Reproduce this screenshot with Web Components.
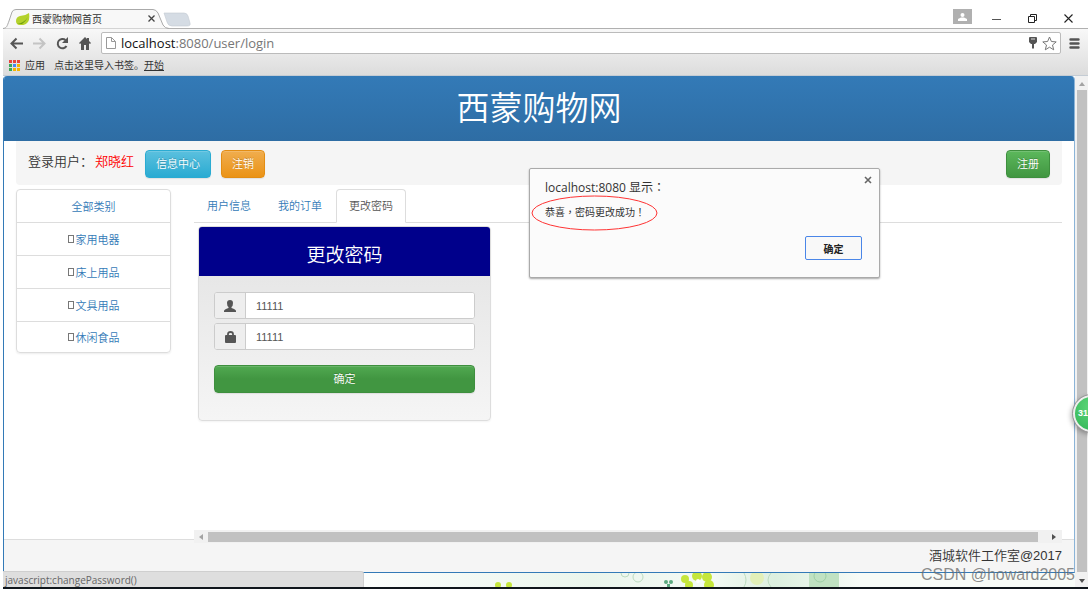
<!DOCTYPE html>
<html lang="zh-CN">
<head>
<meta charset="utf-8">
<title>西蒙购物网首页</title>
<style>
html,body{margin:0;height:100%;background:#fff}
body{font-family:"Liberation Sans","Noto Sans CJK SC",sans-serif;font-size:11px;color:#333}
</style>
</head>
<body>
<browser-window>
  <tab-strip slot="tabs">西蒙购物网首页</tab-strip>
  <address-bar slot="address"></address-bar>
  <bookmark-bar slot="bookmarks"></bookmark-bar>
  <shop-page>
    <shop-header slot="header">西蒙购物网</shop-header>
    <user-bar slot="user">郑晓红</user-bar>
    <category-list slot="side"></category-list>
    <shop-tabs></shop-tabs>
    <password-panel></password-panel>
  </shop-page>
  <alert-dialog slot="overlay" lang="zh-Hant">恭喜，密码更改成功！</alert-dialog>
</browser-window>
<script>
const define = (name, html, setup) => customElements.define(name, class extends HTMLElement {
  constructor() {
    super();
    const t = document.createElement('template');
    t.innerHTML = '<style>*{box-sizing:border-box}button,input{font:inherit}a{text-decoration:none}</style>' + html;
    this.attachShadow({mode: 'open'}).append(t.content.cloneNode(true));
    if (setup) setup.call(this, this.shadowRoot);
  }
});

define('browser-window', `
<style>
:host{display:flex;flex-direction:column;box-sizing:border-box;min-height:100vh;padding:9px 2px 1px 3px;position:relative;overflow:hidden}
.tools{background:linear-gradient(#f8f8f8,#dcdcdc);border-top:1px solid #b0b0b0;border-bottom:1px solid #c4ccd4}
.view{flex:1;display:flex;background:#fff;border-bottom:2px solid #10161c;min-height:0;position:relative;overflow:hidden}
.page{flex:1;display:flex;min-width:0}
.status{position:absolute;left:0;bottom:0;width:361px;height:16px;background:#dedede;border-top:1px solid #cfcfcf;border-right:1px solid #cfcfcf;border-radius:0 3px 0 0;font:10px/16px "Open Sans",sans-serif;color:#666;padding-left:2px}
.mark{position:absolute;right:13px;bottom:2px;font-size:16px;line-height:20px;color:rgba(110,110,110,.8)}
.ball{position:absolute;right:-22px;top:319px;width:37px;height:37px;border-radius:50%;background:radial-gradient(circle at 50% 30%,#5fd77a,#2fb355);border:2px solid #eee;outline:1px solid #999;box-shadow:-2px 2px 5px rgba(0,0,0,.3);color:#fff;font-weight:bold;font-size:9px;line-height:33px;padding-left:3px}
</style>
<slot name="tabs"></slot>
<div class="tools"><slot name="address"></slot><slot name="bookmarks"></slot></div>
<div class="view"><div class="page"><slot></slot></div><scroll-track></scroll-track>
<div class="status">javascript:changePassword()</div><div class="mark">CSDN @howard2005</div><div class="ball">31</div></div>
<slot name="overlay"></slot>`);

define('tab-strip', `
<style>
:host{display:flex;justify-content:space-between;height:19px;color:#333;font-size:10px}
.l{display:flex;position:relative}
.shape{position:absolute;left:0;top:0}
.tab{position:relative;display:flex;align-items:center;width:160px;padding:0 8px 0 13px;gap:2px}
.tab b{font-weight:400;flex:1;white-space:nowrap}
.r{display:flex;align-items:center;padding-right:2px}
button{border:0;background:none;padding:0;display:flex}
.r button{width:36px;height:19px;justify-content:center;align-items:center}
.r .user{width:19px;height:15px;background:#b0b0b0;margin-right:6px;margin-bottom:4px}
</style>
<div class="l"><svg class="shape" width="192" height="20"><path d="M0 19.500C4 19 4 17 6 12L9 3Q10 .5 13 .5H150Q153 .5 155 4L160 16Q162 19.500 166 19.500" fill="#f8f8f8" stroke="#aaa"/><path d="M161 4H181Q184 4 185 7L187 14Q188 17 184 17H169Q165 17 164 13Z" fill="#d5dce4" stroke="#c2cad2" stroke-width=".6"/></svg>
<div class="tab"><svg width="14" height="12" viewBox="0 0 14 12"><path d="M13 0Q9 3 4 3 0 4 0 8q0 3 3 4 6 1 9-3 2-3 1-9z" fill="#b4d22c"/><path d="M1 11Q8 10 12 4 10 8 6 11z" fill="#6f9e10"/></svg><b><slot></slot></b><button aria-label="关闭标签"><svg width="7" height="7"><path d="M.5.5l6 6m0-6l-6 6" stroke="#444" stroke-width="1.300"/></svg></button></div></div>
<div class="r"><button class="user" aria-label="用户"><svg width="9" height="8"><circle cx="4.500" cy="2" r="2" fill="#fff"/><path d="M0 8V6l3-1.500h3L9 6v2z" fill="#fff"/></svg></button>
<button aria-label="最小化"><svg width="9" height="9"><path d="M0 5.500h9" stroke="#555"/></svg></button>
<button aria-label="还原"><svg width="9" height="9" fill="none" stroke="#222"><path d="M2.500 2V.5h6v6H7"/><path d="M.5 2.500h6v6h-6z"/></svg></button>
<button aria-label="关闭"><svg width="9" height="9"><path d="M.5.5l8 8m0-8l-8 8" stroke="#222" stroke-width="1.100"/></svg></button></div>`);

define('address-bar', `
<style>
:host{display:flex;align-items:center;height:28px;padding:3px 8px 3px 7px;box-sizing:border-box}
button{border:0;background:none;padding:0;display:flex;flex:none}
.nav{display:flex;gap:10px;margin-right:10px}
.box{flex:1;display:flex;align-items:center;height:22px;background:#fff;border:1px solid #bbb;border-radius:2px;padding:0 3px 0 4px;gap:5px}
.field{flex:1;font:13px/20px "Open Sans",sans-serif;color:#777}
.field b{font-weight:400;color:#111}
.menu{margin-left:8px}
</style>
<div class="nav">
<button aria-label="后退"><svg width="13" height="13" fill="none" stroke="#555" stroke-width="2"><path d="M13 6.500H2M6.500 1.500l-5 5 5 5"/></svg></button>
<button aria-label="前进"><svg width="13" height="13" fill="none" stroke="#c4c4c4" stroke-width="2"><path d="M0 6.500h11M6.500 1.500l5 5-5 5"/></svg></button>
<button aria-label="刷新"><svg width="13" height="13"><path d="M10.500 9A4.700 4.700 0 1 1 9.500 3" fill="none" stroke="#555" stroke-width="2"/><path d="M12 0v6H6z" fill="#555"/></svg></button>
<button aria-label="主页"><svg width="12" height="13" fill="#555"><path d="M6 0L0 6l1 1 1-.8V13h3V8h2v5h3V6.200l1 .8 1-1-2-2V1H8v1z"/></svg></button></div>
<div class="box"><svg width="10" height="12" fill="none" stroke="#999"><path d="M.5.5h5l4 4v7h-9zM5.500.5v4h4"/></svg>
<div class="field"><b>localhost</b>:8080/user/login</div>
<button aria-label="密码"><svg width="8" height="12" fill="#555"><path d="M0 1q0-1 1-1h6q1 0 1 1v4L6 7H5v4l-1 1-1-1V7H2L0 5z"/><path d="M2 2h4" stroke="#ddd"/></svg></button>
<button aria-label="收藏"><svg width="15" height="15" viewBox="0 0 15 15" fill="#fff" stroke="#777"><path d="M7.500 1l1.900 4.500 4.800.4-3.700 3.100 1.200 4.800-4.200-2.600-4.200 2.600L4.500 9 .8 5.900l4.800-.4z"/></svg></button></div>
<button class="menu" aria-label="菜单"><svg width="11" height="11" stroke="#555" stroke-width="2.400" stroke-linecap="round"><path d="M1.500 1.500h8M1.500 5.500h8M1.500 9.500h8"/></svg></button>`);

define('bookmark-bar', `
<style>
:host{display:flex;align-items:center;box-sizing:border-box;height:18px;padding:0 6px 1px;font-size:10px;line-height:14px;white-space:nowrap}
a{color:#333;display:flex;align-items:center;gap:5px}
span{margin:0 0 0 9px}
.u{text-decoration:underline}
</style>
<a href="#"><svg width="11" height="11"><g id="dots"></g></svg>应用</a><span>点击这里导入书签。</span><a class="u" href="#">开始</a>`,
function (root) {
  const colors = ['#e8453c','#e8453c','#e8453c','#3aa757','#4688f1','#f5b400','#3aa757','#f5b400','#f5b400'];
  root.querySelector('#dots').innerHTML = colors.map((c, i) => `<rect x="${i % 3 * 4}" y="${Math.floor(i / 3) * 4}" width="3" height="3" fill="${c}"/>`).join('');
});

define('scroll-track', `
<style>
:host{display:flex;flex-direction:column;width:13px;background:#f1f1f1;align-items:center}
i{flex:1;width:10px;background:#c1c1c1}
svg{margin:6px 0 4px}
svg+i+svg{margin:7px 0 4px}
</style>
<svg width="6" height="4"><path d="M0 4l3-4 3 4z" fill="#a3a3a3"/></svg><i></i><svg width="6" height="4"><path d="M0 0l3 4 3-4z" fill="#505050"/></svg>`);

define('shop-page', `
<style>
:host{flex:1;display:flex;flex-direction:column;min-width:0;font-weight:350}
.frame{flex:1;display:flex;flex-direction:column;border:1px solid #337ab7;border-right-color:#8bb4d8;border-top:0;border-radius:4px 4px 0 0;overflow:hidden}
.body{flex:1;display:flex;flex-direction:column;padding:0 12px}
.cols{flex:1;display:flex;gap:23px;padding-top:4px;position:relative}
.main{flex:1;min-width:0}
footer{background:#f5f5f5;border-top:1px solid #ddd;height:33px;padding:0 12px;text-align:right;font-size:13px;line-height:32px}
.hs{position:absolute;left:178px;right:0;bottom:-4px;height:13px;background:#f1f1f1;display:flex;align-items:center;padding:0 5px;gap:4px}
.hs i{flex:1;height:10px;background:#c1c1c1;margin-right:10px}
.art{height:14px;overflow:hidden;background:linear-gradient(90deg,#fff 30%,#eaf5ec 55%,#f4faf5 66%,#dcefdf 72%,#f7fbf7 80%)}
.art svg{display:block;margin-left:auto;width:711px;height:14px}
</style>
<div class="frame"><slot name="header"></slot>
<div class="body"><slot name="user"></slot><div class="cols"><slot name="side"></slot><div class="main"><slot></slot></div>
<div class="hs"><svg width="5" height="6"><path d="M4 0v6L0 3z" fill="#a3a3a3"/></svg><i></i><svg width="5" height="6"><path d="M0 0v6l4-3z" fill="#505050"/></svg></div></div></div>
<footer>酒城软件工作室@2017</footer></div>
<div class="art"><svg viewBox="0 0 711 14"><g fill="#c5e63c"><circle cx="134" cy="12" r="3"/><circle cx="145" cy="12" r="3"/><circle cx="321" cy="6" r="4"/><circle cx="333" cy="3" r="5"/><circle cx="343" cy="4" r="5"/><circle cx="345" cy="12" r="5"/><circle cx="325" cy="12" r="4"/></g><circle cx="334" cy="8" r="2" fill="#fff"/><g fill="#5caa80"><circle cx="302" cy="9" r="2"/><circle cx="307" cy="9" r="2"/><path d="M303 11h3v3h-3z"/></g><g fill="none" stroke="#bcdcc0"><circle cx="261" cy="0" r="4"/><circle cx="274" cy="4" r="5"/><path d="M380 0q4 7 0 14M407 0q-6 7 0 14"/></g><circle cx="393" cy="5" r="7" fill="#e2f0b8"/><path d="M445 0h30v14h-30z" fill="#c0e2c2"/><circle cx="456" cy="3" r="6" fill="none" stroke="#9fd0a6"/></svg></div>`);

define('shop-header', `
<style>
:host{display:block;background:linear-gradient(#337ab7,#2e6da4)}
h1{margin:0;padding-bottom:4px;font:350 33px/61px "Noto Sans CJK SC",sans-serif;color:#fff;text-align:center}
</style><h1><slot></slot></h1>`);

define('shop-button', `
<style>
:host{display:block}
button{display:block;width:100%;height:28px;border:1px solid #2aabd2;border-radius:4px;padding:0 10px;color:#fff;font-size:11px;line-height:26px;background:linear-gradient(#5bc0de,#2aabd2);text-shadow:0 -1px 0 rgba(0,0,0,.2);box-shadow:inset 0 1px 0 rgba(255,255,255,.15),0 1px 1px rgba(0,0,0,.08)}
:host([kind=warning]) button{background:linear-gradient(#f0ad4e,#eb9316);border-color:#e38d13}
:host([kind=success]) button{background:linear-gradient(#5cb85c,#419641);border-color:#3e8f3e}
:host([kind=submit]) button{background:linear-gradient(#51a951,#419641 50%);border-color:#3e8f3e}
</style><button type="button"><slot></slot></button>`);

define('user-bar', `
<style>
:host{display:flex;align-items:center;box-sizing:border-box;height:44px;background:#f5f5f5;border-radius:0 0 4px 4px;padding:2px 12px 0;font-size:13px}
p{margin:0 11px 8px 0}
em{font-style:normal;color:red;margin-left:2px}
.out{margin-left:10px}
.reg{margin-left:auto}
</style><p>登录用户：<em><slot></slot></em></p><shop-button>信息中心</shop-button><shop-button class="out" kind="warning">注销</shop-button><shop-button class="reg" kind="success">注册</shop-button>`);

define('category-list', `
<style>
:host{display:block;width:155px}
nav{border:1px solid #ddd;border-radius:4px;box-shadow:0 1px 2px rgba(0,0,0,.075)}
a{display:flex;align-items:center;justify-content:center;height:33px;color:#337ab7;border-bottom:1px solid #ddd;font-size:11px}
a:last-child{border:0;height:30px}
i{width:6px;height:8px;border:1px solid #777;margin-right:2px}
</style><nav><a href="#">全部类别</a><a href="#"><i></i>家用电器</a><a href="#"><i></i>床上用品</a><a href="#"><i></i>文具用品</a><a href="#"><i></i>休闲食品</a></nav>`);

define('shop-tabs', `
<style>
:host{display:flex;gap:1px;border-bottom:1px solid #ddd;height:34px;box-sizing:border-box}
a{height:34px;border:1px solid transparent;border-radius:4px 4px 0 0;padding:0 12px;line-height:32px;color:#337ab7}
.on{background:#fff;border-color:#ddd #ddd #fff;color:#555}
</style><a href="#">用户信息</a><a href="#">我的订单</a><a href="#" class="on">更改密码</a>`);

define('icon-field', `
<style>
:host{display:flex;height:27px;border:1px solid #ccc;border-radius:3px;overflow:hidden;background:#fff;box-sizing:border-box}
label{width:31px;background:#eee;border-right:1px solid #ccc;display:flex;align-items:center;justify-content:center}
input{flex:1;min-width:0;border:0;padding:0 10px;font-size:11px;color:#555;background:#fff;outline:0}
</style><label for="f"><slot></slot></label><input id="f" value="11111">`);

define('password-panel', `
<style>
:host{display:block;margin:3px 0 0 4px;width:293px;border:1px solid #ddd;border-radius:4px;box-sizing:border-box;background:linear-gradient(#e2e2e2,#f5f5f5);overflow:hidden;box-shadow:0 1px 2px rgba(0,0,0,.05)}
h2{margin:-1px -1px 0;background:#00008b;color:#fff;font:350 19px/50px "Noto Sans CJK SC",sans-serif;text-align:center;height:50px;padding-top:3px}
form{padding:16px 15px 27px;display:grid;gap:4px}
shop-button{margin-top:11px}
</style><h2>更改密码</h2><form>
<icon-field><svg width="12" height="12" fill="#555" aria-label="用户"><path d="M6 0q3 0 3 3 0 3-1.500 4v1q4.500 1.500 4.500 3v1H0v-1q0-1.500 4.500-3V7Q3 6 3 3q0-3 3-3z"/></svg></icon-field>
<icon-field><svg width="11" height="12" aria-label="密码"><path d="M3 5V3q0-2 2.500-2T8 3v2" fill="none" stroke="#555" stroke-width="1.800"/><rect y="4" width="11" height="8" rx="1" fill="#555"/></svg></icon-field>
<shop-button kind="submit">确定</shop-button></form>`);

define('alert-dialog', `
<style>
:host{position:absolute;left:529px;top:168px;width:351px;height:110px;box-sizing:border-box;background:#fbfbfb;border:1px solid #aaa;border-radius:2px;box-shadow:0 1px 2px rgba(0,0,0,.35);padding:9px 17px 0 15px;display:flex;flex-direction:column}
h3{margin:0;font:12px/20px "Open Sans","Noto Sans CJK TC",sans-serif;color:#333}
p{margin:6px 0 0;font:10px/16px "Noto Sans CJK TC",sans-serif}
button{padding:0}
.ok{align-self:flex-end;margin-top:16px;width:57px;height:24px;border:1px solid #4a86e8;border-radius:2px;background:#f8f8f8;font-weight:bold;font-size:10px;color:#222}
.x{position:absolute;right:7px;top:7px;border:0;background:none;display:flex}
.ring{position:absolute;left:1px;top:26px}
</style><h3>localhost:8080 显示：</h3><p><slot></slot></p><button class="ok">确定</button>
<button class="x" aria-label="关闭"><svg width="8" height="8"><path d="M1 1l6 6m0-6L1 7" stroke="#666" stroke-width="1.600"/></svg></button>
<svg class="ring" width="127" height="36"><ellipse cx="63.500" cy="18" rx="62.500" ry="17" fill="none" stroke="#f33"/></svg>`);
</script>
</body>
</html>
